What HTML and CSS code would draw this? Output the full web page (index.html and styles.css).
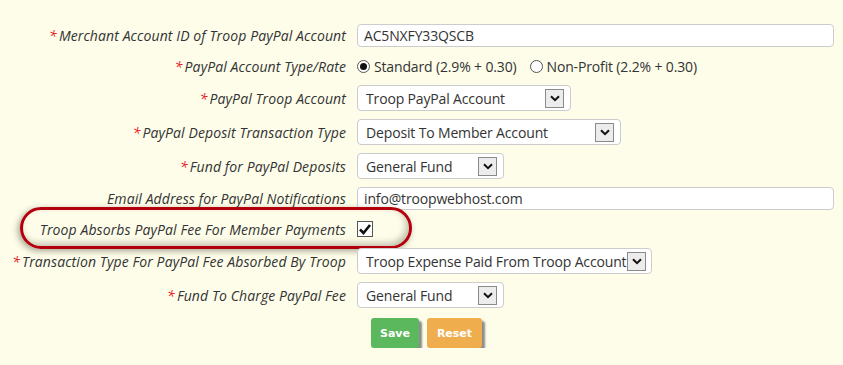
FILE: index.html
```html
<!DOCTYPE html>
<html lang="en">
<head>
    <meta charset="UTF-8">
    <title>PayPal Settings</title>
    <link rel="stylesheet" href="styles.css">
</head>
<body>
    <div class="form">
        <div class="row row-input">
            <label class="lbl"><span class="req">*</span>Merchant Account ID of Troop PayPal Account</label>
            <div class="text wide">AC5NXFY33QSCB</div>
        </div>
        <div class="row row-short">
            <label class="lbl"><span class="req">*</span>PayPal Account Type/Rate</label>
            <div class="radios">
                <span class="radio on"></span><span class="opt">Standard (2.9% + 0.30)</span>
                <span class="radio"></span><span class="opt">Non-Profit (2.2% + 0.30)</span>
            </div>
        </div>
        <div class="row">
            <label class="lbl"><span class="req">*</span>PayPal Troop Account</label>
            <div class="select w214"><span class="val">Troop PayPal Account</span><span class="arrow"><svg width="10" height="7" viewBox="0 0 10 7"><path d="M1 1.2 L5 5.2 L9 1.2" fill="none" stroke="#111" stroke-width="2"/></svg></span></div>
        </div>
        <div class="row">
            <label class="lbl"><span class="req">*</span>PayPal Deposit Transaction Type</label>
            <div class="select w264"><span class="val">Deposit To Member Account</span><span class="arrow"><svg width="10" height="7" viewBox="0 0 10 7"><path d="M1 1.2 L5 5.2 L9 1.2" fill="none" stroke="#111" stroke-width="2"/></svg></span></div>
        </div>
        <div class="row">
            <label class="lbl"><span class="req">*</span>Fund for PayPal Deposits</label>
            <div class="select w147"><span class="val">General Fund</span><span class="arrow"><svg width="10" height="7" viewBox="0 0 10 7"><path d="M1 1.2 L5 5.2 L9 1.2" fill="none" stroke="#111" stroke-width="2"/></svg></span></div>
        </div>
        <div class="row row-input">
            <label class="lbl">Email Address for PayPal Notifications</label>
            <div class="text wide">info@troopwebhost.com</div>
        </div>
        <div class="row row-short">
            <label class="lbl">Troop Absorbs PayPal Fee For Member Payments</label>
            <span class="check"><svg width="14" height="13" viewBox="0 0 14 13"><path d="M2 6.5 L5.5 10 L12 2" fill="none" stroke="#111" stroke-width="2.6"/></svg></span>
            <div class="callout"></div>
        </div>
        <div class="row">
            <label class="lbl"><span class="req">*</span>Transaction Type For PayPal Fee Absorbed By Troop</label>
            <div class="select w295 tight"><span class="val">Troop Expense Paid From Troop Account</span><span class="arrow"><svg width="10" height="7" viewBox="0 0 10 7"><path d="M1 1.2 L5 5.2 L9 1.2" fill="none" stroke="#111" stroke-width="2"/></svg></span></div>
        </div>
        <div class="row">
            <label class="lbl"><span class="req">*</span>Fund To Charge PayPal Fee</label>
            <div class="select w147"><span class="val">General Fund</span><span class="arrow"><svg width="10" height="7" viewBox="0 0 10 7"><path d="M1 1.2 L5 5.2 L9 1.2" fill="none" stroke="#111" stroke-width="2"/></svg></span></div>
        </div>
        <div class="buttons">
            <button type="button" class="btn save">Save</button>
            <button type="button" class="btn reset">Reset</button>
        </div>
    </div>
</body>
</html>
```

FILE: styles.css
```css
body {
    margin: 8px;
    background-color: #fdfdea;
    font-family: 'Open Sans', 'DejaVu Sans', sans-serif;
    font-size: 14px;
    color: #333;
}

div.form {
    padding-top: 12px;
}

div.form div.row {
    position: relative;
    display: flex;
    align-items: center;
    height: 34px;
}

div.form div.row-input {
    height: 31px;
}

div.form div.row-short {
    height: 30px;
}

div.form label.lbl {
    width: 338px;
    flex: none;
    margin-right: 11px;
    text-align: right;
    font-style: italic;
    white-space: nowrap;
    letter-spacing: 0.1px;
}

div.form span.req {
    color: #e8141b;
    margin-right: 2px;
}

div.text {
    box-sizing: border-box;
    height: 23px;
    line-height: 21px;
    padding-left: 6px;
    background-color: #fff;
    border: 1px solid #ccc;
    border-radius: 4px;
    letter-spacing: -0.15px;
}

div.text.wide {
    width: 477px;
}

div.select {
    box-sizing: border-box;
    display: flex;
    align-items: center;
    height: 26px;
    padding-left: 8px;
    padding-right: 6px;
    background-color: #fff;
    border: 1px solid #ccc;
    border-radius: 4px;
}

div.select span.val {
    flex: 1;
    white-space: nowrap;
    overflow: hidden;
    letter-spacing: -0.15px;
}

div.select span.arrow {
    box-sizing: border-box;
    width: 19px;
    height: 19px;
    flex: none;
    display: flex;
    align-items: center;
    justify-content: center;
    background-color: #ececec;
    border: 1px solid #8a8a8a;
}

div.select.tight {
    padding-right: 5px;
}

.w147 { width: 147px; }
.w214 { width: 214px; }
.w264 { width: 264px; }
.w295 { width: 295px; }

div.radios {
    display: flex;
    align-items: center;
    letter-spacing: -0.15px;
}

div.radios span.radio {
    box-sizing: border-box;
    width: 13px;
    height: 13px;
    border: 1px solid #555;
    border-radius: 50%;
    background-color: #fff;
    margin-right: 4px;
    position: relative;
}

div.radios span.radio.on::after {
    content: "";
    position: absolute;
    left: 2px;
    top: 2px;
    width: 7px;
    height: 7px;
    border-radius: 50%;
    background-color: #111;
}

div.radios span.opt {
    margin-right: 13px;
}

span.check {
    box-sizing: border-box;
    width: 16px;
    height: 16px;
    border: 1px solid #555;
    background-color: #fff;
    display: flex;
    align-items: center;
    justify-content: center;
}

/* red ring drawn round the checkbox row */
div.callout {
    position: absolute;
    left: 12px;
    top: -7px;
    width: 392px;
    height: 42px;
    box-sizing: border-box;
    border: 3px solid #b3000c;
    border-radius: 22px;
    box-shadow: -2px 2px 6px rgba(60, 60, 40, 0.45), inset -3px -3px 6px rgba(60, 60, 40, 0.3);
    pointer-events: none;
}

div.buttons {
    display: flex;
    gap: 8px;
    margin-top: 6px;
    padding-left: 363px;
}

.btn {
    height: 30px;
    border: none;
    border-radius: 3px;
    color: #fff;
    font-family: 'DejaVu Sans', sans-serif;
    font-size: 11px;
    font-weight: bold;
    box-shadow: 3px 3px 2px #8c8c8c;
}

.btn.save {
    width: 48px;
    background-color: #5cb85c;
}

.btn.reset {
    width: 55px;
    background-color: #f0ad4e;
}
```
